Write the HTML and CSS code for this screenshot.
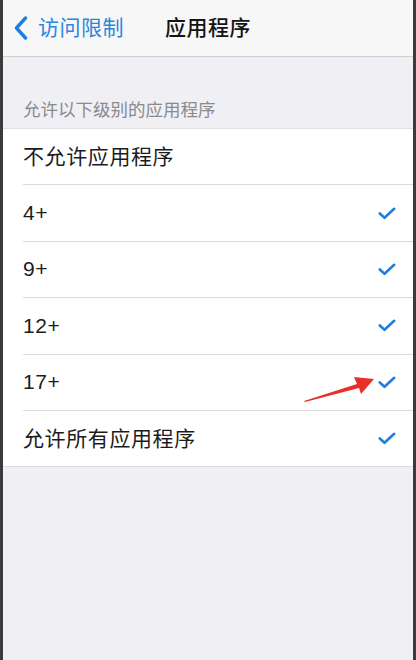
FILE: index.html
```html
<!DOCTYPE html>
<html lang="zh">
<head>
<meta charset="utf-8">
<link rel="stylesheet" href="styles.css">
</head>
<body>
<div class="screen">
  <header class="nav">
    <div class="back">
      <svg class="chevron" width="14" height="24" viewBox="0 0 14 24"><path d="M11.5 2 L2.5 12 L11.5 22" fill="none" stroke="#1f7fe0" stroke-width="3.4" stroke-linecap="round" stroke-linejoin="round"/></svg>
      <span class="back-text">访问限制</span>
    </div>
    <div class="title">应用程序</div>
  </header>
  <div class="section-header">允许以下级别的应用程序</div>
  <ul class="list">
    <li class="row"><span class="label">不允许应用程序</span></li>
    <li class="row"><span class="label">4+</span><svg class="check" width="18" height="13" viewBox="0 0 18 13"><path d="M1.8 6.5 L6.5 10.8 L16.2 1.8" fill="none" stroke="#1f7fe0" stroke-width="2.6" stroke-linecap="round" stroke-linejoin="round"/></svg></li>
    <li class="row"><span class="label">9+</span><svg class="check" width="18" height="13" viewBox="0 0 18 13"><path d="M1.8 6.5 L6.5 10.8 L16.2 1.8" fill="none" stroke="#1f7fe0" stroke-width="2.6" stroke-linecap="round" stroke-linejoin="round"/></svg></li>
    <li class="row"><span class="label">12+</span><svg class="check" width="18" height="13" viewBox="0 0 18 13"><path d="M1.8 6.5 L6.5 10.8 L16.2 1.8" fill="none" stroke="#1f7fe0" stroke-width="2.6" stroke-linecap="round" stroke-linejoin="round"/></svg></li>
    <li class="row"><span class="label">17+</span><svg class="check" width="18" height="13" viewBox="0 0 18 13"><path d="M1.8 6.5 L6.5 10.8 L16.2 1.8" fill="none" stroke="#1f7fe0" stroke-width="2.6" stroke-linecap="round" stroke-linejoin="round"/></svg></li>
    <li class="row"><span class="label">允许所有应用程序</span><svg class="check" width="18" height="13" viewBox="0 0 18 13"><path d="M1.8 6.5 L6.5 10.8 L16.2 1.8" fill="none" stroke="#1f7fe0" stroke-width="2.6" stroke-linecap="round" stroke-linejoin="round"/></svg></li>
  </ul>
  <svg class="arrow" width="80" height="34" viewBox="0 0 80 34"><polygon points="2,32 55,15 52,8 72,10 59,25 57,19 3,33" fill="#e8302a"/></svg>
</div>
</body>
</html>
```

FILE: styles.css
```css
html, body {
  margin: 0;
  padding: 0;
}
body {
  background: #3b3b3b;
  width: 416px;
  height: 660px;
  overflow: hidden;
  font-family: "Liberation Sans", "Noto Sans CJK SC", sans-serif;
}
.screen {
  position: relative;
  margin-left: 3px;
  width: 410px;
  height: 660px;
  background: #efeff4;
}
.nav {
  height: 56px;
  background: #f7f7f7;
  border-bottom: 1px solid #cfcfd2;
  display: flex;
  align-items: center;
  position: relative;
}
.back {
  display: flex;
  align-items: center;
  padding-left: 11px;
  gap: 10px;
  color: #2b86dd;
}
.chevron {
  display: block;
}
.back-text {
  font-size: 21px;
  letter-spacing: 0.5px;
  line-height: 24px;
}
.title {
  margin-left: 41px;
  font-size: 21px;
  font-weight: 500;
  color: #141414;
  letter-spacing: 0.5px;
  line-height: 24px;
}
.section-header {
  padding: 42px 0 0 20px;
  height: 29px;
  font-size: 17.5px;
  color: #8a8a8e;
  line-height: 22px;
}
.list {
  list-style: none;
  margin: 0;
  padding: 0 0 0 20px;
  background: #ffffff;
  border-top: 1px solid #e0e0e3;
  border-bottom: 1px solid #dcdcdf;
}
.row {
  height: 55.4px;
  display: flex;
  align-items: center;
  justify-content: space-between;
  padding-right: 17px;
  border-bottom: 1px solid #dcdcdf;
  box-sizing: content-box;
}
.row:last-child {
  border-bottom: none;
}
.label {
  font-size: 21px;
  color: #1c1c1c;
  letter-spacing: 0.6px;
  line-height: 24px;
}
.check {
  display: block;
}
.arrow {
  position: absolute;
  left: 299px;
  top: 369px;
}
```
